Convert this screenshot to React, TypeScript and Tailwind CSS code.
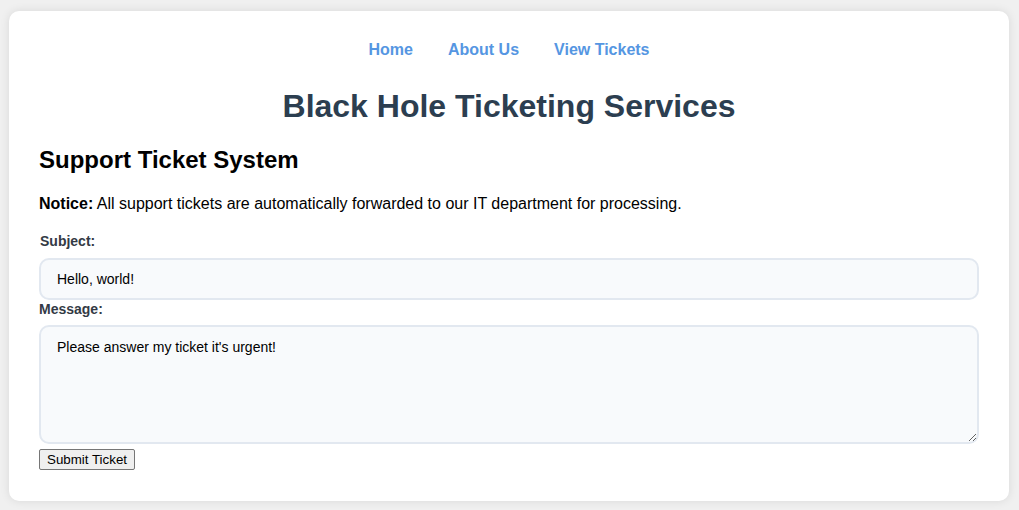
import { useState } from 'react';

export default function App() {
  const [subject, setSubject] = useState('Hello, world!');
  const [message, setMessage] = useState("Please answer my ticket it's urgent!");

  return (
    <div className="min-h-screen bg-[#f0f0f0] pt-[11px] pb-[11px] font-['Liberation_Sans',Arial,sans-serif]">
      <div className="ml-[9px] w-[1000px] bg-white rounded-[10px] shadow-[0_0_10px_rgba(0,0,0,0.1)] p-[30px]">
        {/* Nav */}
        <nav className="flex justify-center gap-[35px] h-[18px] items-center">
          <a href="#" className="text-[16px] font-bold text-[#5596e2] no-underline leading-[18px]">Home</a>
          <a href="#" className="text-[16px] font-bold text-[#5596e2] no-underline leading-[18px]">About Us</a>
          <a href="#" className="text-[16px] font-bold text-[#5596e2] no-underline leading-[18px]">View Tickets</a>
        </nav>

        <h1 className="mt-[29px] text-center text-[32px] leading-[37px] font-bold text-[#2c3e50]">
          Black Hole Ticketing Services
        </h1>

        <h2 className="mt-[21px] text-[24px] leading-[28px] font-bold text-black">Support Ticket System</h2>

        <p className="mt-[21px] text-[16px] leading-[18px] text-black">
          <strong>Notice:</strong> All support tickets are automatically forwarded to our IT department for processing.
        </p>

        <form className="mt-[20px]" onSubmit={(e) => e.preventDefault()}>
          <label className="block pl-px text-[14px] leading-[16px] font-bold text-[#333a45]">Subject:</label>
          <input
            type="text"
            value={subject}
            onChange={(e) => setSubject(e.target.value)}
            className="block mt-[9px] w-full h-[42px] px-4 text-[14px] text-black bg-[#f8fafc] border-2 border-[#e2e8f0] rounded-[10px] outline-none"
          />
          <label className="block mt-[1px] text-[14px] leading-[16px] font-bold text-[#333a45]">Message:</label>
          <textarea
            value={message}
            onChange={(e) => setMessage(e.target.value)}
            className="block mt-[8px] w-full h-[119px] px-4 py-3 text-[14px] leading-[16px] text-black bg-[#f8fafc] border-2 border-[#e2e8f0] rounded-[10px] outline-none resize-y"
          />
          <button
            type="submit"
            className="mt-[5px] h-[21px] px-[7px] text-[13.33px] leading-[16px] text-black bg-[#efefef] border border-[#767676] rounded-[2px]"
          >
            Submit Ticket
          </button>
        </form>
      </div>
    </div>
  );
}
